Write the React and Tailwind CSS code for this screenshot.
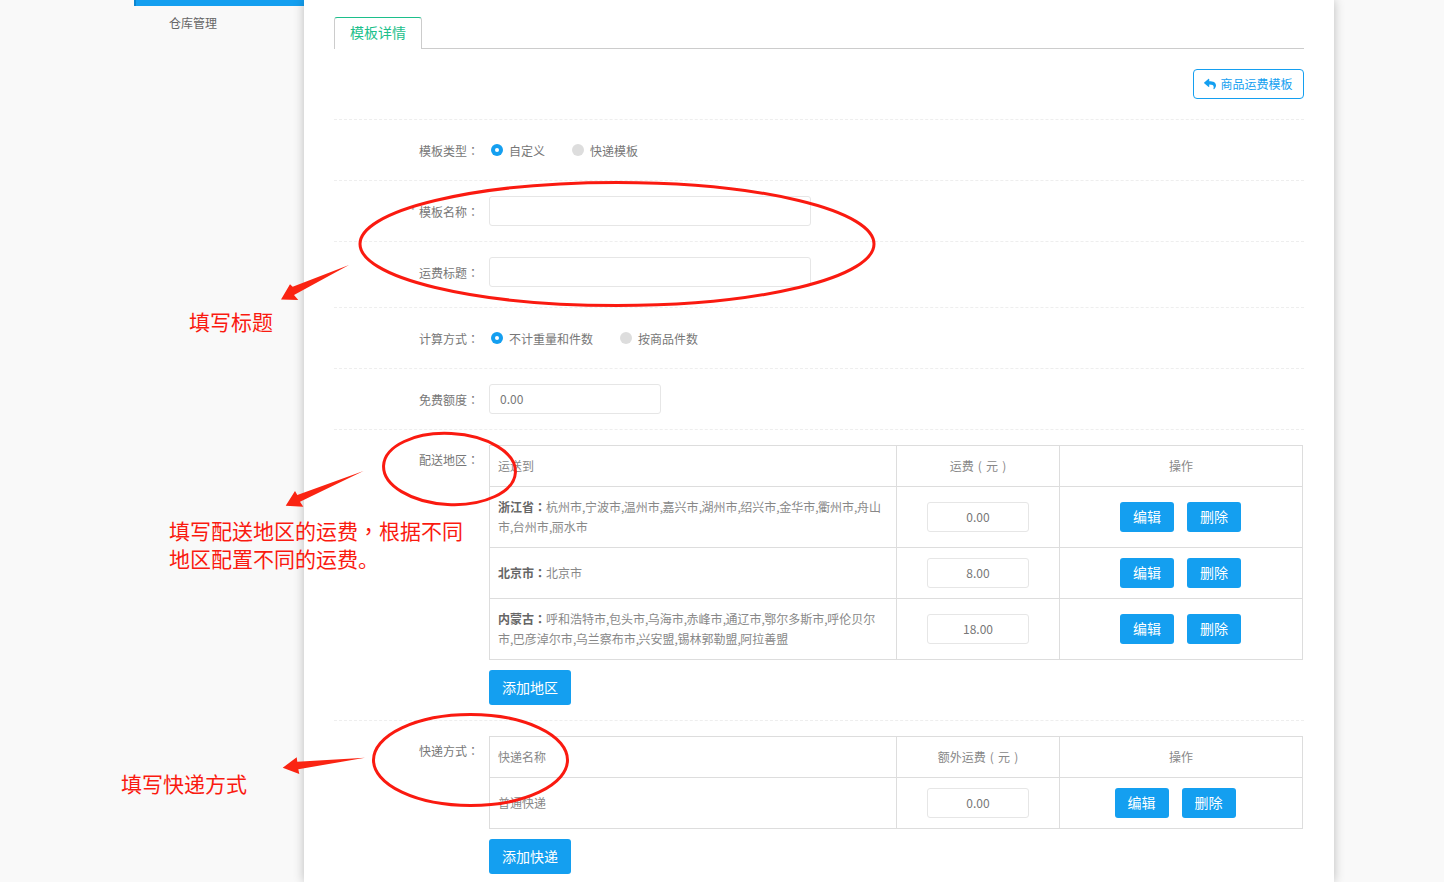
import React from "react";
import { FaReply } from "react-icons/fa";

function Colon() {
  return <span className="font-['Noto_Sans_CJK_TC']">：</span>;
}

function Row({ label, star, lh = "leading-[32px]", pb = "pb-[15px]", children }) {
  return (
    <div className={`flex pt-[15px] ${pb} border-b border-dashed border-[#eeeeee]`}>
      <label className={`relative h-[30px] w-[145px] shrink-0 text-right ${lh} text-[#777777]`}>
        {star && <span className="absolute left-[77px] top-[11px] text-[8px] leading-none text-[#999999]">*</span>}
        {label}
        <Colon />
      </label>
      <div className="ml-[10px] flex-1">{children}</div>
    </div>
  );
}

function Radio({ checked, children, className = "" }) {
  return (
    <span className={`flex items-center ${className}`}>
      {checked ? (
        <span className="flex h-3 w-3 items-center justify-center rounded-full bg-[#149ff0]">
          <span className="h-1 w-1 rounded-full bg-white" />
        </span>
      ) : (
        <span className="h-3 w-3 rounded-full bg-[#dddddd]" />
      )}
      <span className="ml-[6px] pt-[2px] text-[#777777]">{children}</span>
    </span>
  );
}

function TextInput({ w, value, center }) {
  return (
    <div className={`flex h-[30px] ${w} items-center rounded-[3px] border border-[#e6e6e6] bg-white text-[#777777] ${center ? "justify-center" : "pl-[10px]"}`}>
      {value}
    </div>
  );
}

function Btn({ children }) {
  return (
    <button className="h-[30px] w-[54px] rounded-[3px] bg-[#149ff0] pb-[2px] text-[14px] text-white">{children}</button>
  );
}

function Add({ children }) {
  return (
    <button className="mt-[10px] block h-[35px] w-[82px] rounded-[3px] bg-[#149ff0] text-[14px] text-white">{children}</button>
  );
}

const th = "border border-[#dddddd] font-normal text-[#888888] h-[41px] text-center";
const td = "border border-[#dddddd] text-center";

function Ops({ shift }) {
  return (
    <div className={`flex justify-center gap-[13px] ${shift ? "pr-[12px]" : "pr-[1px]"}`}>
      <Btn>编辑</Btn>
      <Btn>删除</Btn>
    </div>
  );
}

function Cities({ text }) {
  const parts = text.split(",");
  return parts.map((p, i) => (
    <React.Fragment key={i}>
      {p}
      {i < parts.length - 1 && <span className="tracking-[-0.5px]">,</span>}
    </React.Fragment>
  ));
}

function AreaRow({ h, name, text, fee }) {
  return (
    <tr className={h}>
      <td className="border border-[#dddddd] pl-2 pr-[10px] text-left leading-[20px] text-[#888888]">
        <b className="font-bold text-[#666666]">
          {name}
          <Colon />
        </b>
        <Cities text={text} />
      </td>
      <td className={td}>
        <div className="flex justify-center">
          <TextInput w="w-[102px]" value={fee} center />
        </div>
      </td>
      <td className={td}>
        <Ops />
      </td>
    </tr>
  );
}

function Colgroup() {
  return (
    <colgroup>
      <col className="w-[407px]" />
      <col className="w-[163px]" />
      <col className="w-[243px]" />
    </colgroup>
  );
}

function Annotations() {
  return (
    <>
      <svg className="pointer-events-none absolute left-0 top-0" width="1444" height="882" fill="none">
        <ellipse cx="617" cy="244" rx="257" ry="61.5" stroke="#fa1a10" strokeWidth="3" />
        <ellipse cx="449.5" cy="469" rx="66" ry="35.5" transform="rotate(3 449.5 469)" stroke="#fa1a10" strokeWidth="3" />
        <ellipse cx="470.5" cy="760" rx="97" ry="45.5" stroke="#fa1a10" strokeWidth="3" />
        <polygon fill="#fa2412" points="349,265 292.7,286.7 290,284.3 281,299.5 298.3,300 294,295" />
        <polygon fill="#fa2412" points="363.5,471 297.3,495 295,491 285.7,505.7 303.3,506.7 300,501.7" />
        <polygon fill="#fa2412" points="365,757.7 297.3,761.7 296.7,757.3 282.7,767.7 299.3,774 298.3,769.3" />
      </svg>
      <div className="absolute left-[189px] top-[307px] text-[21px] leading-[28px] text-[#fa1a10]">填写标题</div>
      <div className="absolute left-[169px] top-[516px] w-[300px] text-[21px] leading-[28px] text-[#fa1a10]">
        填写配送地区的运费<span className="font-['Noto_Sans_CJK_TC']">，</span>根据不同
        <br />
        地区配置不同的运费。
      </div>
      <div className="absolute left-[121px] top-[769px] text-[21px] leading-[28px] text-[#fa1a10]">填写快递方式</div>
    </>
  );
}

export default function App() {
  return (
    <div
      className="relative flex h-[882px] w-[1444px] overflow-hidden bg-[#f9f9f9] text-[12px] text-[#777777]"
      style={{ fontFamily: '"Noto Sans CJK SC", "Liberation Sans", sans-serif' }}
    >
      <aside className="ml-[134px] w-[170px] shrink-0">
        <div className="h-[6px] border-l-2 border-[#0c86d0] bg-[#149ff0]" />
        <div className="pl-[35px] pt-[8px] leading-[18px] text-[#666666]">仓库管理</div>
      </aside>
      <main className="h-full w-[1030px] shrink-0 bg-white px-[30px] pt-[17px] shadow-[0_0_10px_rgba(0,0,0,0.25)]">
        <div className="flex h-[32px] border-b border-[#cccccc]">
          <div className="flex h-[32px] w-[88px] items-center justify-center rounded-t-[3px] border border-b-0 border-[#cccccc] border-t-[#1cbf8b] bg-white pb-[2px] text-[14px] text-[#1cbf8b]">
            模板详情
          </div>
        </div>
        <div className="flex justify-end border-b border-dashed border-[#eeeeee] pb-[20px] pt-[20px]">
          <button className="flex h-[30px] w-[111px] items-center justify-center gap-[4px] rounded-[4px] border border-[#149ff0] bg-white text-[#149ff0]">
            <FaReply size={12} />
            商品运费模板
          </button>
        </div>

        <Row label="模板类型">
          <div className="flex h-[30px] items-center pl-[2px]">
            <Radio checked>自定义</Radio>
            <Radio className="ml-[27px]">快递模板</Radio>
          </div>
        </Row>
        <Row label="模板名称" star>
          <TextInput w="w-[322px]" />
        </Row>
        <Row label="运费标题" pb="pb-[20px]">
          <TextInput w="w-[322px]" />
        </Row>
        <Row label="计算方式">
          <div className="flex h-[30px] items-center pl-[2px]">
            <Radio checked>不计重量和件数</Radio>
            <Radio className="ml-[27px]">按商品件数</Radio>
          </div>
        </Row>
        <Row label="免费额度">
          <TextInput w="w-[172px]" value="0.00" />
        </Row>
        <Row label="配送地区" lh="leading-[30px]">
          <table className="w-[814px] table-fixed border-collapse">
            <Colgroup />
            <thead>
              <tr>
                <th className={`${th} pl-2 !text-left`}>运送到</th>
                <th className={`${th} [word-spacing:1.5px]`}>运费 ( 元 )</th>
                <th className={th}>操作</th>
              </tr>
            </thead>
            <tbody>
              <AreaRow
                h="h-[61px]"
                name="浙江省"
                text="杭州市,宁波市,温州市,嘉兴市,湖州市,绍兴市,金华市,衢州市,舟山市,台州市,丽水市"
                fee="0.00"
              />
              <AreaRow h="h-[51px]" name="北京市" text="北京市" fee="8.00" />
              <AreaRow
                h="h-[61px]"
                name="内蒙古"
                text="呼和浩特市,包头市,乌海市,赤峰市,通辽市,鄂尔多斯市,呼伦贝尔市,巴彦淖尔市,乌兰察布市,兴安盟,锡林郭勒盟,阿拉善盟"
                fee="18.00"
              />
            </tbody>
          </table>
          <Add>添加地区</Add>
        </Row>
        <Row label="快递方式" lh="leading-[30px]">
          <table className="w-[814px] table-fixed border-collapse">
            <Colgroup />
            <thead>
              <tr>
                <th className={`${th} pl-2 !text-left`}>快递名称</th>
                <th className={`${th} [word-spacing:1.5px]`}>额外运费 ( 元 )</th>
                <th className={th}>操作</th>
              </tr>
            </thead>
            <tbody>
              <tr className="h-[51px]">
                <td className="border border-[#dddddd] pl-2 text-left text-[#888888]">普通快递</td>
                <td className={td}>
                  <div className="flex justify-center">
                    <TextInput w="w-[102px]" value="0.00" center />
                  </div>
                </td>
                <td className={td}>
                  <Ops shift />
                </td>
              </tr>
            </tbody>
          </table>
          <Add>添加快递</Add>
        </Row>
      </main>
      <Annotations />
    </div>
  );
}
